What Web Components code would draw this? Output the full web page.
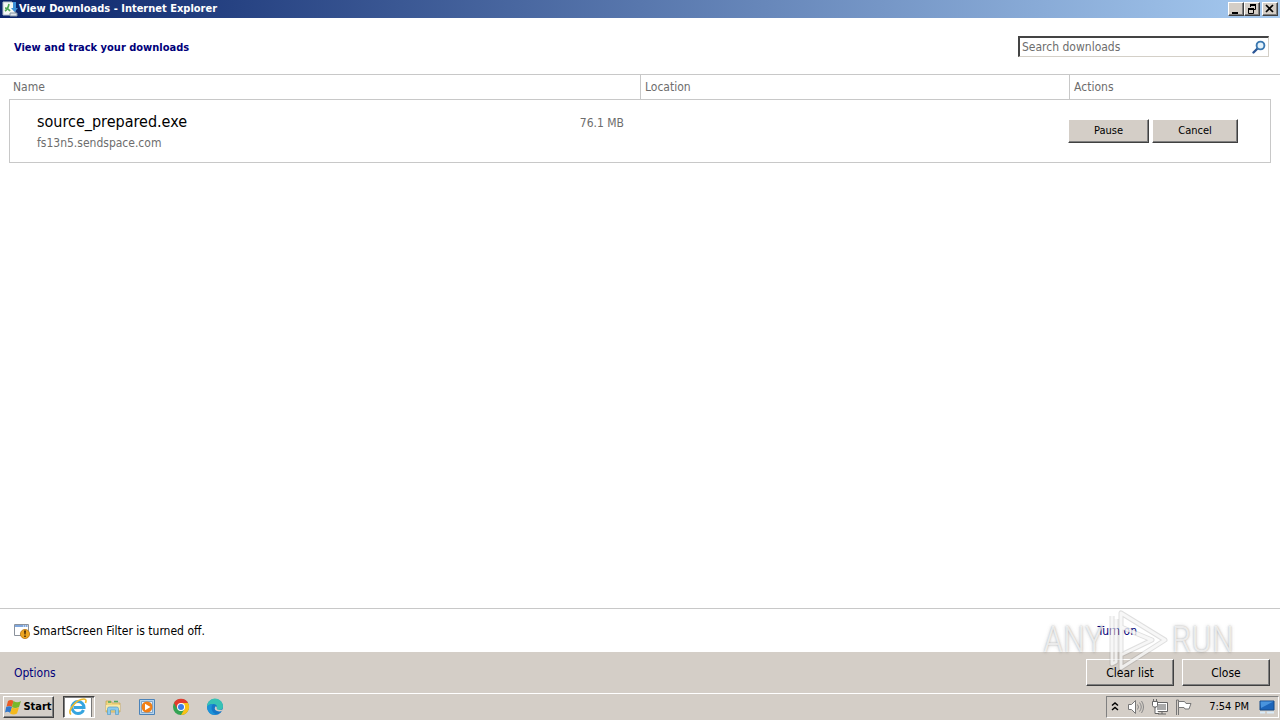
<!DOCTYPE html>
<html lang="en">
<head>
<meta charset="utf-8">
<title>View Downloads - Internet Explorer</title>
<style>
  html, body { height: 100%; margin: 0; }
  body {
    font: 12px/16px "DejaVu Sans Condensed", "Noto Sans", sans-serif;
    color: #000;
    background: #fff;
    --face: #d4cec7;
    --line: #c8c8c8;
    --link: #00007a;
    --muted: #6d6d6d;
  }
</style>
</head>
<body>
<downloads-screen></downloads-screen>

<script>
const define = (name, html) => customElements.define(name, class extends HTMLElement {
  constructor() {
    super();
    const t = document.createElement('template');
    t.innerHTML = html;
    this.attachShadow({ mode: 'open' }).append(t.content.cloneNode(true));
  }
});

define('classic-button', `
<style>
  :host { display: block; }
  button {
    box-sizing: border-box; width: 100%; height: 100%; padding: 0; margin: 0;
    font: inherit; color: inherit; background: var(--face); border: 1px solid;
    border-color: #fff #404040 #404040 #fff; box-shadow: inset -1px -1px #808080;
    display: flex; align-items: center; justify-content: center; gap: 1px;
  }
</style>
<button type="button"><slot></slot></button>`);

define('title-bar', `
<style>
  :host {
    display: flex; align-items: center; height: 18px; padding: 0 2px;
    background: linear-gradient(90deg, #0a246a, #a6caf0); color: #fff;
  }
  h1 { flex: 1; margin: 0; padding-left: 1px; font: bold 11px/18px "DejaVu Sans Condensed", sans-serif; }
  .buttons { display: flex; }
  classic-button { width: 16px; height: 14px; color: #000; }
  classic-button:last-child { margin-left: 2px; }
</style>
<svg width="16" height="16" viewBox="0 0 16 16" aria-hidden="true">
  <path d="M1 1h9l3 3v10H1z" fill="#f4f8f4" stroke="#b8c4cc"/>
  <path d="M3 10q3-2 4-7M3 7q3 0 5 3" fill="none" stroke="#4ca552" stroke-width="1.6"/>
  <path d="M11 1h3v6h2l-3.500 4L9 7h2z" fill="#3c8fd8"/>
  <path d="M8 12h7v3H8z" fill="#dfe5ea" stroke="#8494a4"/>
</svg>
<h1><slot></slot></h1>
<div class="buttons">
  <classic-button><svg width="12" height="10" role="img" aria-label="Minimize"><path d="M2 8h6v2H2z"/></svg></classic-button>
  <classic-button><svg width="12" height="10" role="img" aria-label="Restore"><path d="M4.500 3V1.500h5v4H8M2.500 4.500h5v5h-5z" fill="none" stroke="#000"/><path d="M4 0h6v2H4zM2 4h6v2H2z"/></svg></classic-button>
  <classic-button><svg width="12" height="10" role="img" aria-label="Close"><path d="M2 1l7 7M9 1L2 8" stroke="#000" stroke-width="1.700"/></svg></classic-button>
</div>`);

define('search-box', `
<style>
  :host { display: flex; align-items: center; box-sizing: border-box; width: 251px; height: 21px;
    border: 1px solid #d4d0c8; border-top: 2px solid #444; border-left: 2px solid #444; background: #fff; padding-right: 2px; }
  input { flex: 1; min-width: 0; border: 0; outline: 0; padding: 0 2px; font: inherit; background: none; height: 16px; }
  input::placeholder { color: var(--muted); opacity: 1; }
</style>
<input type="search" placeholder="Search downloads" aria-label="Search downloads">
<svg width="14" height="14" viewBox="0 0 14 14" aria-hidden="true">
  <path d="M6 8L1.500 12.500" stroke="#2c5796" stroke-width="2.400" stroke-linecap="round"/>
  <circle cx="8.500" cy="5.500" r="3.900" fill="#e4f3fc" stroke="#3b78b0" stroke-width="1.900"/>
</svg>`);

define('downloads-table', `
<style>
  :host { display: block; border-top: 1px solid var(--line); padding: 0 9px; color: var(--muted); }
  table { width: 100%; table-layout: fixed; border-collapse: separate; border-spacing: 0; }
  .name { width: 50%; } .actions { width: 16%; }
  th { height: 24px; padding: 0 4px; text-align: left; font-weight: normal; }
  th + th { border-left: 1px solid var(--line); }
  td { height: 62px; padding: 0; border: solid var(--line); border-width: 1px 0; }
  td:first-child { border-left-width: 1px; }
  td:last-child { border-right-width: 1px; }
  .file { display: flex; justify-content: space-between; padding: 4px 16px 0 27px; }
  .file strong { display: block; font-weight: normal; font-size: 16px; line-height: 20px; color: #000; }
  .file span { line-height: 22px; }
  .run { display: flex; justify-content: flex-end; gap: 3px; padding-right: 32px; font-size: 11px; color: #000; }
  classic-button { flex: none; height: 24px; width: 86px; }
  classic-button:first-child { width: 81px; }
</style>
<table>
  <colgroup><col class="name"><col><col class="actions"></colgroup>
  <thead><tr><th scope="col">Name</th><th scope="col">Location</th><th scope="col">Actions</th></tr></thead>
  <tbody><tr>
    <td><div class="file"><div><strong>source_prepared.exe</strong><span>fs13n5.sendspace.com</span></div><span>76.1 MB</span></div></td>
    <td></td>
    <td><div class="run"><classic-button>Pause</classic-button><classic-button>Cancel</classic-button></div></td>
  </tr></tbody>
</table>`);

define('smart-screen', `
<style>
  :host { display: flex; align-items: center; height: 43px; border-top: 1px solid var(--line); padding: 0 143px 0 14px; }
  p { flex: 1; margin: 0 0 0 3px; }
  a { color: var(--link); text-decoration: none; }
</style>
<svg width="16" height="16" viewBox="0 0 16 16" aria-hidden="true">
  <path d="M.5 1.500h14v11H.5z" fill="#fff" stroke="#8b929c"/><path d="M1 2h13v2H1z" fill="#7fa6dc"/><path d="M9 3h1M11 3h1M13 3h1" stroke="#fff"/>
  <circle cx="11" cy="11" r="4.600" fill="#eda520" stroke="#b87412" stroke-width=".8"/>
  <path d="M10 7.500h2l-.4 4h-1.200zM10.200 12.500h1.600v1.500h-1.600z" fill="#4b2c05"/>
</svg>
<p>SmartScreen Filter is turned off.</p>
<a href="#turn-on">Turn on</a>`);

define('action-footer', `
<style>
  :host { display: flex; align-items: center; gap: 8px; height: 41px; padding: 0 10px 0 14px; background: var(--face); }
  a { color: var(--link); text-decoration: none; margin-right: auto; }
  classic-button { width: 88px; height: 27px; }
</style>
<a href="#options">Options</a>
<classic-button>Clear list</classic-button>
<classic-button>Close</classic-button>`);

define('any-watermark', `
<style>
  :host { position: absolute; right: 46px; bottom: 50px; display: flex; align-items: center; height: 60px; pointer-events: none;
    font: 300 36px/60px "Roboto Condensed", Roboto, sans-serif; color: rgba(255,255,255,.7);
    text-shadow: 0 0 2px rgba(90,90,90,.45), 0 0 4px rgba(90,90,90,.2); }
  svg { margin: 0 3px 0 5px; }
</style>
<span>ANY</span>
<svg width="60" height="60" viewBox="0 0 60 60" aria-hidden="true">
  <g fill="none" stroke-linejoin="round">
    <path d="M4 6v48l4-2V9M13 3v14l31 13-31 15v13l44-28zM13 17v28" stroke="#808080" stroke-opacity=".25" stroke-width="5"/>
    <path d="M4 6v48l4-2V9M13 3v14l31 13-31 15v13l44-28zM13 17v28" stroke="#fff" stroke-opacity=".75" stroke-width="3"/>
  </g>
</svg>
<span>RUN</span>`);

define('system-tray', `
<style>
  :host { display: flex; align-items: center; box-sizing: border-box; width: 173px; height: 22px; padding: 0 3px 0 4px; gap: 6px;
    border: 1px solid; border-color: #808080 #fff #fff #808080; font-size: 11px; }
  time { margin-left: auto; }
  .volume { margin-left: 2px; }
  .screen { margin-left: 4px; }
</style>
<svg width="8" height="12" viewBox="0 0 8 12" role="img" aria-label="Show hidden icons"><path d="M1 4.500L4 2l3 2.500M1 9l3-2.500L7 9" fill="none" stroke="#000" stroke-width="1.500"/></svg>
<svg class="volume" width="18" height="16" viewBox="0 0 18 16" role="img" aria-label="Volume"><path d="M1.500 5.500h3l4-4v13l-4-4h-3z" fill="#fff" stroke="#777"/><path d="M10.500 5.500q2 2.500 0 5M12.500 3.500q3.500 4.500 0 9M14.500 2q4 6 0 12" fill="none" stroke="#888"/></svg>
<svg width="18" height="16" viewBox="0 0 18 16" role="img" aria-label="Network"><path d="M4.500 3.500h12v9h-12zM7 15h8M11 12v3" fill="#fff" stroke="#666"/><path d="M6 5h9v6H6z" fill="#aaa"/><path d="M1.500 2.500h5v4L5.500 8h-3l-1-1.500zM2.500 0v2M5.500 0v2M4 8v6.500h4" fill="#fff" stroke="#666"/></svg>
<svg width="18" height="16" viewBox="0 0 18 16" role="img" aria-label="Action Center"><path d="M1.500 1v15M3.500 1v15M1.500 1h2" stroke="#777"/><path d="M3.500 2.500h6l1.500 2h5l-2 5.500h-4l-1-1.500H3.500z" fill="#fff" stroke="#777"/></svg>
<time datetime="19:54">7:54 PM</time>
<svg class="screen" width="16" height="14" viewBox="0 0 16 14" role="img" aria-label="Show desktop"><path d="M1 1h14v9H1z" fill="#1c65ba" stroke="#174a86"/><path d="M1.500 1.500h13L2 8z" fill="#4994dd"/><path d="M1 12.500h5M8 12.500h7" stroke="#d8eaf8" stroke-width="2"/></svg>`);

define('task-bar', `
<style>
  :host { display: flex; align-items: center; height: 26px; padding: 0 1px 0 3px; border-top: 1px solid #fff; background: var(--face); }
  .start { width: 51px; height: 22px; font: bold 11px/16px "DejaVu Sans Condensed", sans-serif; }
  nav { display: flex; align-items: center; flex: 1; gap: 16px; }
  nav button { border: 0; padding: 0; background: none; width: 18px; height: 18px; display: block; }
  nav .active { box-sizing: border-box; width: 32px; height: 22px; margin: 0 -7px 0 9px; padding: 0 4px; background: #fff;
    border: 1px solid; border-color: #404040 #fff #fff #404040; box-shadow: inset 1px 1px #808080, inset -2px 0 var(--face), inset -3px 0 #777; }
  svg { display: block; }
</style>
<classic-button class="start"><svg width="17" height="16" viewBox="0 0 17 16" aria-hidden="true">
  <path d="M3 2q3-2 5.500 0L7 7.700q-3-1.500-5.500 0z" fill="#ea5b24"/><path d="M8.500 2q3.500 2.500 7.500 0L14 8q-4 2-7 0z" fill="#78b82a"/>
  <path d="M1.200 8q3-1.500 5.800 0L5.300 14Q3 12 0 13.500z" fill="#3178cc"/><path d="M7 8.300q3 2 7 0L12 14.500q-3.500 2-7 0z" fill="#f4b91c"/>
</svg>Start</classic-button>
<nav aria-label="Taskbar">
  <button type="button" class="active" aria-label="Internet Explorer"><svg width="20" height="20" viewBox="0 0 20 20">
    <path d="M15.500 13q-1.500 3.500-5.500 3.500A6 6 0 1 1 16 10.500H6" fill="none" stroke="#36a5df" stroke-width="3"/>
    <path d="M3 17.500C-1 14 8 2 16 2q3 0 1.500 4" fill="none" stroke="#efbb2d" stroke-width="1.600"/></svg></button>
  <button type="button" aria-label="Explorer"><svg width="18" height="18" viewBox="0 0 18 18">
    <path d="M2 3h5l1 2h8v9H2z" fill="#efd681" stroke="#c6a54a" stroke-width=".7"/><path d="M4 4h3M10 3.500h4" stroke="#4fa85e" stroke-width="1.500"/><path d="M2 7h14v5H2z" fill="#f9e9a6"/>
    <path d="M3.500 16.500v-6q0-1.500 2-1.500h7q2 0 2 1.500v6h-3V12h-5v4.500z" fill="#8ccbed" stroke="#549cc8" stroke-width=".7"/></svg></button>
  <button type="button" aria-label="Media Player"><svg width="18" height="18" viewBox="0 0 18 18">
    <path d="M1.500 1.500h15v15h-15z" fill="#b6d4ec" stroke="#4b83b9"/><path d="M3.500 3.500h11v11h-11z" fill="#e5eff8" stroke="#80a6ca"/><circle cx="9" cy="9" r="5.500" fill="#f17f16"/><path d="M7 5.800v6.400L12.500 9z" fill="#fff"/></svg></button>
  <button type="button" aria-label="Chrome"><svg width="18" height="18" viewBox="0 0 18 18">
    <circle cx="9" cy="9" r="8" fill="#34a353"/><path d="M9 5h7a8 8 0 0 1-7 12l3.500-6z" fill="#fbc116"/><path d="M2 5l3.500 6L9 9V5h7A8 8 0 0 0 2 5z" fill="#e33b2e"/>
    <circle cx="9" cy="9" r="4" fill="#fff"/><circle cx="9" cy="9" r="3" fill="#3c7de8"/></svg></button>
  <button type="button" aria-label="Edge"><svg width="18" height="18" viewBox="0 0 18 18">
    <circle cx="9" cy="9" r="8" fill="#1577c7"/><path d="M1 9a8 8 0 0 1 16-1q.2 4-4 4-3 0-2-2Q11.500 6 7 6q-4 0-6 3z" fill="#37c2b4"/><path d="M1 9q2-3 6-3-2 2-1.500 5 1 4 5 5.500Q2 18 1 9z" fill="#1c93d8"/><path d="M10 8q-3 3 1 5 3 1 5.500-.5l2 .5V10q-2 2.500-5.500 2-3-.5-2-2z" fill="#d4cec7"/></svg></button>
</nav>
<system-tray></system-tray>`);

define('downloads-screen', `
<style>
  :host { display: flex; flex-direction: column; min-height: 100%; position: relative; }
  header { display: flex; align-items: center; justify-content: space-between; height: 56px; padding: 0 11px 0 14px; }
  h2 { margin: 0; padding-top: 3px; font: bold 11px/16px "DejaVu Sans Condensed", sans-serif; color: var(--link); }
  main { flex: 1; }
</style>
<title-bar>View Downloads - Internet Explorer</title-bar>
<header><h2>View and track your downloads</h2><search-box></search-box></header>
<main><downloads-table></downloads-table></main>
<smart-screen></smart-screen>
<action-footer></action-footer>
<task-bar></task-bar>
<any-watermark></any-watermark>`);
</script>
</body>
</html>
